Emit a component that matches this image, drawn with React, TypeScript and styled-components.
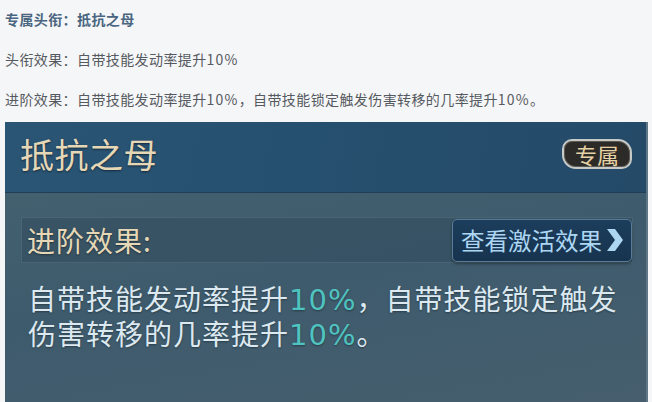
import React from "react";
import styled, { createGlobalStyle } from "styled-components";

const GlobalStyle = createGlobalStyle`
  html, body {
    margin: 0;
    padding: 0;
    background: #f5f6f8;
    overflow: hidden;
  }
  body {
    font-family: "Noto Sans CJK SC", "Noto Sans", sans-serif;
  }
`;

const Page = styled.div`
  width: 652px;
  height: 402px;
  padding: 9px 4px 0 5px;
  box-sizing: border-box;
  overflow: hidden;
  display: flex;
  flex-direction: column;
`;

const Info = styled.div`
  display: flex;
  flex-direction: column;
  gap: 20px;
`;

const InfoLine = styled.p<{ $strong?: boolean }>`
  margin: 0;
  height: 20px;
  line-height: 20px;
  font-size: 14px;
  letter-spacing: 0.4px;
  color: ${(p) => (p.$strong ? "#4a6580" : "#555a60")};
  font-weight: ${(p) => (p.$strong ? 700 : 400)};
`;

const InfoNum = styled.span`
  letter-spacing: 1.2px;
`;

const Panel = styled.div`
  margin-top: 13px;
  width: 643px;
  height: 300px;
  flex: none;
  display: flex;
  flex-direction: column;
  border-right: 2px solid #5f7686;
  box-sizing: border-box;
  overflow: hidden;
`;

const Header = styled.div`
  height: 71px;
  flex: none;
  display: flex;
  align-items: center;
  justify-content: space-between;
  padding: 0 14px 6px 15px;
  box-sizing: border-box;
  background: linear-gradient(100deg, #2a5575 0%, #26506f 45%, #244a68 100%);
  border-bottom: 1px solid #1f3f58;
  box-shadow: 0 1px 0 #4b6a7f;
`;

const Title = styled.div`
  font-size: 34px;
  line-height: 40px;
  color: #e6d8b7;
  letter-spacing: 0.5px;
  text-shadow: 0 1px 2px rgba(0, 0, 0, 0.5);
`;

const Badge = styled.div`
  width: 70px;
  height: 30px;
  box-sizing: border-box;
  border: 2px solid #c8cac8;
  border-radius: 10px 14px 10px 14px;
  background: #2d2b27;
  display: flex;
  align-items: center;
  justify-content: center;
  font-size: 22px;
  line-height: 26px;
  color: #e6d2a4;
  box-shadow: inset 0 0 0 1px #5b5a54;
`;

const Body = styled.div`
  flex: 1;
  padding: 24px 13px 0 16px;
  background: linear-gradient(170deg, #43606f 0%, #3e5b6d 40%, #475f6e 100%);
`;

const Row = styled.div`
  height: 46px;
  display: flex;
  align-items: center;
  justify-content: space-between;
  background: rgba(40, 65, 82, 0.35);
  border: 1px solid rgba(90, 115, 130, 0.55);
  box-sizing: border-box;
`;

const Label = styled.div`
  padding-left: 5px;
  font-size: 28px;
  line-height: 34px;
  letter-spacing: 1px;
  color: #e6d8b7;
  text-shadow: 0 1px 2px rgba(0, 0, 0, 0.4);
`;

const ActivateButton = styled.div`
  width: 180px;
  height: 43px;
  box-sizing: border-box;
  display: flex;
  align-items: center;
  gap: 1px;
  padding-left: 8px;
  background: linear-gradient(180deg, #1c3d5c 0%, #17344f 100%);
  border: 1px solid #5a7b96;
  border-radius: 5px;
  font-size: 23.5px;
  line-height: 30px;
  color: #acd6f2;
  box-shadow: 0 2px 3px rgba(0, 0, 0, 0.35);
`;

const Desc = styled.div`
  margin-top: 18px;
  padding: 0 8px 0 7px;
  font-size: 28px;
  line-height: 35px;
  letter-spacing: 1px;
  color: #dce9f0;
  text-shadow: 0 1px 2px rgba(0, 0, 0, 0.35);
`;

const Hl = styled.span`
  font-family: "DejaVu Sans", "Noto Sans", sans-serif;
  font-size: 29px;
  line-height: 1;
  color: #4fc3c0;
  letter-spacing: 1px;
`;

const Chevron = () => (
  <svg width="22" height="26" viewBox="0 0 22 26">
    <path d="M4 2 L12 2 L20 13 L12 24 L4 24 L12 13 Z" fill="#acd6f2" />
  </svg>
);

export default function App() {
  return (
    <>
      <GlobalStyle />
      <Page>
        <Info>
          <InfoLine $strong>专属头衔：抵抗之母</InfoLine>
          <InfoLine>
            头衔效果：自带技能发动率提升<InfoNum>10%</InfoNum>
          </InfoLine>
          <InfoLine>
            进阶效果：自带技能发动率提升<InfoNum>10%</InfoNum>，自带技能锁定触发伤害转移的几率提升
            <InfoNum>10%</InfoNum>。
          </InfoLine>
        </Info>
        <Panel>
          <Header>
            <Title>抵抗之母</Title>
            <Badge>专属</Badge>
          </Header>
          <Body>
            <Row>
              <Label>进阶效果:</Label>
              <ActivateButton>
                查看激活效果
                <Chevron />
              </ActivateButton>
            </Row>
            <Desc>
              自带技能发动率提升<Hl>10%</Hl>，自带技能锁定触发伤害转移的几率提升<Hl>10%</Hl>。
            </Desc>
          </Body>
        </Panel>
      </Page>
    </>
  );
}
